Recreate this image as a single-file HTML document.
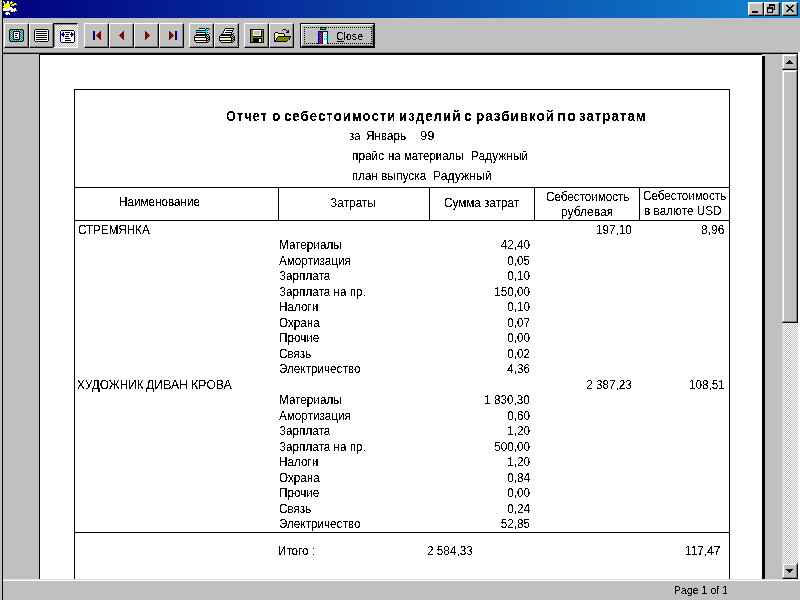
<!DOCTYPE html>
<html><head><meta charset="utf-8"><style>
html,body{margin:0;padding:0}
body{width:800px;height:600px;background:#c0c0c0;position:relative;overflow:hidden;font-family:"Liberation Sans",sans-serif}
.a{position:absolute}
.t{position:absolute;line-height:0;white-space:pre;font-size:11.7px;color:#000}
.r{text-align:right}
.btn{position:absolute;width:25px;height:25px;box-sizing:border-box;background:#c0c0c0;border-top:1px solid #fff;border-left:1px solid #fff;border-right:1px solid #000;border-bottom:1px solid #000;box-shadow:inset -1px -1px 0 #808080}
.tb{position:absolute;width:16px;height:14px;box-sizing:border-box;background:#c0c0c0;border-top:1px solid #fff;border-left:1px solid #fff;border-right:1px solid #000;border-bottom:1px solid #000;box-shadow:inset -1px -1px 0 #808080, inset 1px 1px 0 #dfdfdf}
svg{position:absolute;shape-rendering:crispEdges}
</style></head><body>

<div class="a" style="left:2px;top:0;width:1px;height:600px;background:#000"></div>
<div class="a" style="left:3px;top:0;width:797px;height:18px;background:linear-gradient(to right,#000080,#1084d0)"></div>
<svg style="left:3px;top:0px" width="15" height="15" viewBox="0 0 15 15"><path fill="#ffff00" d="M0 1h1v1h-1zM4 1h2v1h-2zM8 1h1v1h-1zM0 2h2v1h-2zM4 2h2v1h-2zM7 2h3v1h-3zM1 3h1v1h-1zM7 3h2v1h-2zM11 3h2v1h-2zM1 4h6v1h-6zM9 4h5v1h-5zM1 5h2v1h-2zM4 5h3v1h-3zM8 5h3v1h-3zM1 6h6v1h-6zM1 7h5v1h-5zM3 8h2v1h-2z"/><path fill="#fff" d="M3 3h3v1h-3zM3 5h1v1h-1zM0 6h1v1h-1zM6 7h3v1h-3zM0 8h3v1h-3zM5 8h5v1h-5zM11 8h2v1h-2zM0 9h13v1h-13zM0 10h6v1h-6zM8 10h6v1h-6zM8 11h2v1h-2zM11 11h1v1h-1zM3 12h3v1h-3zM2 13h5v1h-5zM3 14h2v1h-2zM6 14h1v1h-1z"/><path fill="#808080" d="M6 10h2v1h-2zM7 11h1v1h-1zM10 11h1v1h-1z"/><path fill="#000" d="M12 11h2v1h-2z"/></svg>
<div class="tb" style="left:748px;top:2px"></div>
<div class="a" style="left:752px;top:11px;width:6px;height:2px;background:#000"></div>
<div class="tb" style="left:764px;top:2px"></div>
<svg style="left:764px;top:2px" width="16" height="14" viewBox="0 0 16 14">
<path d="M5 2h6v2h-6zM10 4h1v4h-1zM9 7h1v1h-1zM5 4h1v1h-1z" fill="#000"/>
<path d="M3 5h6v2h-6zM3 7h1v4h-1zM8 7h1v4h-1zM3 10h6v1h-6z" fill="#000"/>
</svg>
<div class="tb" style="left:782px;top:2px"></div>
<svg style="left:782px;top:2px" width="16" height="14" viewBox="0 0 16 14">
<path d="M4 3h2v1h-2zM10 3h2v1h-2zM5 4h2v1h-2zM9 4h2v1h-2zM6 5h4v1h-4zM7 6h2v1h-2zM6 7h4v1h-4zM5 8h2v1h-2zM9 8h2v1h-2zM4 9h2v1h-2zM10 9h2v1h-2z" fill="#000"/>
</svg>
<div class="btn" style="left:4px;top:23px"></div>
<div class="btn" style="left:29px;top:23px"></div>
<div class="a" style="left:53px;top:23px;width:25px;height:25px;box-sizing:border-box;border-top:1px solid #000;border-left:1px solid #000;border-right:1px solid #fff;border-bottom:1px solid #fff;box-shadow:inset 1px 1px 0 #808080;background-color:#fff;background-image:linear-gradient(45deg,#c0c0c0 25%,transparent 25%,transparent 75%,#c0c0c0 75%),linear-gradient(45deg,#c0c0c0 25%,transparent 25%,transparent 75%,#c0c0c0 75%);background-size:2px 2px;background-position:0 0,1px 1px"></div>
<div class="btn" style="left:84px;top:23px"></div>
<div class="btn" style="left:109px;top:23px"></div>
<div class="btn" style="left:134px;top:23px"></div>
<div class="btn" style="left:159px;top:23px"></div>
<div class="btn" style="left:189px;top:23px"></div>
<div class="btn" style="left:214px;top:23px"></div>
<div class="btn" style="left:244px;top:23px"></div>
<div class="btn" style="left:269px;top:23px"></div>
<svg style="left:9px;top:29px" width="15" height="13" viewBox="0 0 15 13"><path fill="#000" d="M1 0h13v1h-13zM0 1h1v1h-1zM14 1h1v1h-1zM0 2h1v1h-1zM4 2h7v1h-7zM14 2h1v1h-1zM0 3h1v1h-1zM4 3h1v1h-1zM10 3h1v1h-1zM14 3h1v1h-1zM0 4h1v1h-1zM4 4h1v1h-1zM10 4h1v1h-1zM14 4h1v1h-1zM0 5h1v1h-1zM4 5h1v1h-1zM10 5h1v1h-1zM14 5h1v1h-1zM0 6h1v1h-1zM4 6h1v1h-1zM10 6h1v1h-1zM14 6h1v1h-1zM0 7h1v1h-1zM4 7h1v1h-1zM10 7h1v1h-1zM14 7h1v1h-1zM0 8h1v1h-1zM4 8h1v1h-1zM10 8h1v1h-1zM14 8h1v1h-1zM0 9h1v1h-1zM4 9h1v1h-1zM10 9h1v1h-1zM14 9h1v1h-1zM0 10h1v1h-1zM4 10h7v1h-7zM14 10h1v1h-1zM0 11h1v1h-1zM14 11h1v1h-1zM1 12h13v1h-13z"/><path fill="#008080" d="M1 1h1v1h-1zM3 1h1v1h-1zM5 1h1v1h-1zM7 1h1v1h-1zM9 1h1v1h-1zM11 1h1v1h-1zM13 1h1v1h-1zM2 2h1v1h-1zM12 2h1v1h-1zM1 3h1v1h-1zM3 3h1v1h-1zM11 3h1v1h-1zM13 3h1v1h-1zM2 4h1v1h-1zM12 4h1v1h-1zM1 5h1v1h-1zM3 5h1v1h-1zM11 5h1v1h-1zM13 5h1v1h-1zM2 6h1v1h-1zM12 6h1v1h-1zM1 7h1v1h-1zM3 7h1v1h-1zM11 7h1v1h-1zM13 7h1v1h-1zM2 8h1v1h-1zM12 8h1v1h-1zM1 9h1v1h-1zM3 9h1v1h-1zM11 9h1v1h-1zM13 9h1v1h-1zM2 10h1v1h-1zM12 10h1v1h-1zM1 11h1v1h-1zM3 11h1v1h-1zM5 11h1v1h-1zM7 11h1v1h-1zM9 11h1v1h-1zM11 11h1v1h-1zM13 11h1v1h-1z"/><path fill="#c0c0c0" d="M2 1h1v1h-1zM4 1h1v1h-1zM6 1h1v1h-1zM8 1h1v1h-1zM10 1h1v1h-1zM12 1h1v1h-1zM1 2h1v1h-1zM3 2h1v1h-1zM11 2h1v1h-1zM13 2h1v1h-1zM2 3h1v1h-1zM12 3h1v1h-1zM1 4h1v1h-1zM3 4h1v1h-1zM11 4h1v1h-1zM13 4h1v1h-1zM2 5h1v1h-1zM12 5h1v1h-1zM1 6h1v1h-1zM3 6h1v1h-1zM11 6h1v1h-1zM13 6h1v1h-1zM2 7h1v1h-1zM12 7h1v1h-1zM1 8h1v1h-1zM3 8h1v1h-1zM11 8h1v1h-1zM13 8h1v1h-1zM2 9h1v1h-1zM12 9h1v1h-1zM1 10h1v1h-1zM3 10h1v1h-1zM11 10h1v1h-1zM13 10h1v1h-1zM2 11h1v1h-1zM4 11h1v1h-1zM6 11h1v1h-1zM8 11h1v1h-1zM10 11h1v1h-1zM12 11h1v1h-1z"/><path fill="#fff" d="M5 3h5v1h-5zM5 4h1v1h-1zM9 4h1v1h-1zM5 5h5v1h-5zM5 6h1v1h-1zM8 6h2v1h-2zM5 7h5v1h-5zM5 8h1v1h-1zM9 8h1v1h-1zM5 9h5v1h-5z"/><path fill="#000080" d="M6 4h3v1h-3zM6 6h2v1h-2zM6 8h3v1h-3z"/></svg>
<svg style="left:34px;top:29px" width="15" height="13" viewBox="0 0 15 13"><path fill="#000" d="M1 0h13v1h-13zM0 1h1v1h-1zM14 1h1v1h-1zM0 2h1v1h-1zM2 2h11v1h-11zM14 2h1v1h-1zM0 3h1v1h-1zM14 3h1v1h-1zM0 4h1v1h-1zM2 4h11v1h-11zM14 4h1v1h-1zM0 5h1v1h-1zM14 5h1v1h-1zM0 6h1v1h-1zM2 6h11v1h-11zM14 6h1v1h-1zM0 7h1v1h-1zM14 7h1v1h-1zM0 8h1v1h-1zM2 8h11v1h-11zM14 8h1v1h-1zM0 9h1v1h-1zM14 9h1v1h-1zM0 10h1v1h-1zM2 10h11v1h-11zM14 10h1v1h-1zM0 11h1v1h-1zM14 11h1v1h-1zM1 12h13v1h-13z"/><path fill="#fff" d="M1 1h13v1h-13zM1 2h1v1h-1zM13 2h1v1h-1zM1 3h13v1h-13zM1 4h1v1h-1zM13 4h1v1h-1zM1 5h13v1h-13zM1 6h1v1h-1zM13 6h1v1h-1zM1 7h13v1h-13zM1 8h1v1h-1zM13 8h1v1h-1zM1 9h13v1h-13zM1 10h1v1h-1zM13 10h1v1h-1zM1 11h13v1h-13z"/></svg>
<svg style="left:60px;top:30px" width="15" height="13" viewBox="0 0 15 13"><path fill="#000" d="M1 0h13v1h-13zM14 1h1v1h-1zM5 2h5v1h-5zM14 2h1v1h-1zM14 3h1v1h-1zM6 4h3v1h-3zM14 4h1v1h-1zM14 5h1v1h-1zM5 6h4v1h-4zM14 6h1v1h-1zM14 7h1v1h-1zM5 8h5v1h-5zM14 8h1v1h-1zM14 9h1v1h-1zM5 10h6v1h-6zM14 10h1v1h-1zM14 11h1v1h-1zM1 12h13v1h-13z"/><path fill="#000080" d="M0 1h1v1h-1zM0 2h1v1h-1zM3 2h1v1h-1zM11 2h1v1h-1zM0 3h1v1h-1zM2 3h2v1h-2zM11 3h2v1h-2zM0 4h5v1h-5zM10 4h4v1h-4zM0 5h1v1h-1zM2 5h2v1h-2zM11 5h2v1h-2zM0 6h1v1h-1zM3 6h1v1h-1zM11 6h1v1h-1zM0 7h1v1h-1zM0 8h1v1h-1zM0 9h1v1h-1zM0 10h1v1h-1zM0 11h1v1h-1z"/><path fill="#fff" d="M1 1h13v1h-13zM1 2h2v1h-2zM4 2h1v1h-1zM10 2h1v1h-1zM12 2h2v1h-2zM1 3h1v1h-1zM4 3h7v1h-7zM13 3h1v1h-1zM5 4h1v1h-1zM9 4h1v1h-1zM1 5h1v1h-1zM4 5h7v1h-7zM13 5h1v1h-1zM1 6h2v1h-2zM4 6h1v1h-1zM9 6h2v1h-2zM12 6h2v1h-2zM1 7h13v1h-13zM1 8h4v1h-4zM10 8h4v1h-4zM1 9h13v1h-13zM1 10h4v1h-4zM11 10h3v1h-3zM1 11h13v1h-13z"/></svg>
<svg style="left:93px;top:31px" width="8" height="9" viewBox="0 0 8 9"><path fill="#000080" d="M0 0h2v1h-2zM0 1h2v1h-2zM0 2h2v1h-2zM0 3h2v1h-2zM0 4h2v1h-2zM0 5h2v1h-2zM0 6h2v1h-2zM0 7h2v1h-2zM0 8h2v1h-2z"/><path fill="#800000" d="M7 0h1v1h-1zM6 1h2v1h-2zM5 2h3v1h-3zM4 3h4v1h-4zM3 4h5v1h-5zM4 5h4v1h-4zM5 6h3v1h-3zM6 7h2v1h-2zM7 8h1v1h-1z"/></svg>
<svg style="left:119px;top:31px" width="5" height="9" viewBox="0 0 5 9"><path fill="#800000" d="M4 0h1v1h-1zM3 1h2v1h-2zM2 2h3v1h-3zM1 3h4v1h-4zM0 4h5v1h-5zM1 5h4v1h-4zM2 6h3v1h-3zM3 7h2v1h-2zM4 8h1v1h-1z"/></svg>
<svg style="left:145px;top:31px" width="5" height="9" viewBox="0 0 5 9"><path fill="#800000" d="M0 0h1v1h-1zM0 1h2v1h-2zM0 2h3v1h-3zM0 3h4v1h-4zM0 4h5v1h-5zM0 5h4v1h-4zM0 6h3v1h-3zM0 7h2v1h-2zM0 8h1v1h-1z"/></svg>
<svg style="left:169px;top:31px" width="8" height="9" viewBox="0 0 8 9"><path fill="#800000" d="M0 0h1v1h-1zM0 1h2v1h-2zM0 2h3v1h-3zM0 3h4v1h-4zM0 4h5v1h-5zM0 5h4v1h-4zM0 6h3v1h-3zM0 7h2v1h-2zM0 8h1v1h-1z"/><path fill="#000080" d="M6 0h2v1h-2zM6 1h2v1h-2zM6 2h2v1h-2zM6 3h2v1h-2zM6 4h2v1h-2zM6 5h2v1h-2zM6 6h2v1h-2zM6 7h2v1h-2zM6 8h2v1h-2z"/></svg>
<svg style="left:194px;top:28px" width="16" height="15" viewBox="0 0 16 15"><path fill="#000" d="M5 0h6v1h-6zM12 0h3v1h-3zM11 1h1v1h-1zM15 1h1v1h-1zM2 2h10v1h-10zM13 2h1v1h-1zM2 4h10v1h-10zM13 4h1v1h-1zM11 5h1v1h-1zM15 5h1v1h-1zM2 6h13v1h-13zM1 7h12v1h-12zM14 7h1v1h-1zM0 8h1v1h-1zM11 8h1v1h-1zM13 8h1v1h-1zM15 8h1v1h-1zM0 9h13v1h-13zM14 9h2v1h-2zM0 10h1v1h-1zM12 10h2v1h-2zM15 10h1v1h-1zM0 11h1v1h-1zM12 11h1v1h-1zM14 11h2v1h-2zM0 12h14v1h-14zM15 12h1v1h-1zM1 13h1v1h-1zM12 13h1v1h-1zM14 13h1v1h-1zM2 14h12v1h-12z"/><path fill="#fff" d="M5 1h6v1h-6zM3 5h8v1h-8zM1 8h10v1h-10zM1 10h11v1h-11zM1 11h6v1h-6zM10 11h2v1h-2zM2 13h10v1h-10z"/><path fill="#00ffff" d="M12 1h3v1h-3zM12 2h1v1h-1zM1 3h12v1h-12zM12 4h1v1h-1zM12 5h3v1h-3z"/><path fill="#c0c0c0" d="M13 7h1v1h-1zM12 8h1v1h-1zM14 8h1v1h-1zM13 9h1v1h-1zM14 10h1v1h-1zM13 11h1v1h-1zM14 12h1v1h-1zM13 13h1v1h-1z"/><path fill="#ffff00" d="M7 11h3v1h-3z"/></svg>
<svg style="left:219px;top:28px" width="16" height="15" viewBox="0 0 16 15"><path fill="#000" d="M6 0h9v1h-9zM5 1h1v1h-1zM14 1h1v1h-1zM5 2h1v1h-1zM7 2h7v1h-7zM4 3h1v1h-1zM13 3h1v1h-1zM4 4h1v1h-1zM6 4h7v1h-7zM3 5h1v1h-1zM12 5h1v1h-1zM14 5h1v1h-1zM2 6h12v1h-12zM1 7h12v1h-12zM14 7h1v1h-1zM0 8h1v1h-1zM11 8h1v1h-1zM13 8h1v1h-1zM15 8h1v1h-1zM0 9h13v1h-13zM14 9h2v1h-2zM0 10h1v1h-1zM12 10h2v1h-2zM15 10h1v1h-1zM0 11h1v1h-1zM12 11h1v1h-1zM14 11h2v1h-2zM0 12h14v1h-14zM15 12h1v1h-1zM1 13h1v1h-1zM12 13h1v1h-1zM14 13h1v1h-1zM2 14h12v1h-12z"/><path fill="#fff" d="M6 1h8v1h-8zM6 2h1v1h-1zM5 3h8v1h-8zM5 4h1v1h-1zM4 5h8v1h-8zM1 8h10v1h-10zM1 10h11v1h-11zM1 11h6v1h-6zM10 11h2v1h-2zM2 13h10v1h-10z"/><path fill="#c0c0c0" d="M13 5h1v1h-1zM14 6h1v1h-1zM13 7h1v1h-1zM12 8h1v1h-1zM14 8h1v1h-1zM13 9h1v1h-1zM14 10h1v1h-1zM13 11h1v1h-1zM14 12h1v1h-1zM13 13h1v1h-1z"/><path fill="#ffff00" d="M7 11h3v1h-3z"/></svg>
<svg style="left:250px;top:29px" width="14" height="14" viewBox="0 0 14 14"><path fill="#000" d="M0 0h14v1h-14zM0 1h1v1h-1zM11 1h1v1h-1zM13 1h1v1h-1zM0 2h1v1h-1zM11 2h3v1h-3zM0 3h1v1h-1zM11 3h1v1h-1zM13 3h1v1h-1zM0 4h1v1h-1zM11 4h1v1h-1zM13 4h1v1h-1zM0 5h1v1h-1zM11 5h1v1h-1zM13 5h1v1h-1zM0 6h1v1h-1zM11 6h1v1h-1zM13 6h1v1h-1zM0 7h1v1h-1zM3 7h9v1h-9zM13 7h1v1h-1zM0 8h1v1h-1zM13 8h1v1h-1zM0 9h1v1h-1zM3 9h9v1h-9zM13 9h1v1h-1zM0 10h1v1h-1zM3 10h6v1h-6zM11 10h1v1h-1zM13 10h1v1h-1zM0 11h1v1h-1zM3 11h6v1h-6zM11 11h1v1h-1zM13 11h1v1h-1zM0 12h1v1h-1zM3 12h6v1h-6zM11 12h1v1h-1zM13 12h1v1h-1zM0 13h14v1h-14z"/><path fill="#808000" d="M1 1h2v1h-2zM1 2h2v1h-2zM1 3h2v1h-2zM12 3h1v1h-1zM1 4h2v1h-2zM12 4h1v1h-1zM1 5h2v1h-2zM12 5h1v1h-1zM1 6h2v1h-2zM12 6h1v1h-1zM1 7h2v1h-2zM12 7h1v1h-1zM1 8h12v1h-12zM1 9h2v1h-2zM12 9h1v1h-1zM1 10h2v1h-2zM12 10h1v1h-1zM1 11h2v1h-2zM12 11h1v1h-1zM1 12h2v1h-2zM12 12h1v1h-1z"/><path fill="#fff" d="M3 1h8v1h-8zM12 1h1v1h-1zM3 2h1v1h-1zM10 2h1v1h-1zM3 3h1v1h-1zM10 3h1v1h-1zM3 4h1v1h-1zM10 4h1v1h-1zM3 5h1v1h-1zM10 5h1v1h-1zM3 6h8v1h-8zM9 10h2v1h-2zM9 11h2v1h-2zM9 12h2v1h-2z"/><path fill="#c0c0c0" d="M4 2h6v1h-6zM4 3h6v1h-6zM4 4h6v1h-6zM4 5h6v1h-6z"/></svg>
<svg style="left:274px;top:28px" width="18" height="14" viewBox="0 0 18 14"><path fill="#000" d="M9 1h3v1h-3zM8 2h1v1h-1zM12 2h1v1h-1zM14 2h1v1h-1zM13 3h2v1h-2zM1 4h3v1h-3zM12 4h3v1h-3zM0 5h1v1h-1zM4 5h6v1h-6zM0 6h1v1h-1zM10 6h1v1h-1zM0 7h1v1h-1zM10 7h1v1h-1zM0 8h1v1h-1zM4 8h13v1h-13zM0 9h1v1h-1zM3 9h1v1h-1zM16 9h1v1h-1zM0 10h1v1h-1zM2 10h1v1h-1zM15 10h1v1h-1zM0 11h1v1h-1zM2 11h1v1h-1zM15 11h1v1h-1zM0 12h2v1h-2zM13 12h1v1h-1zM0 13h13v1h-13z"/><path fill="#ffff00" d="M1 5h1v1h-1zM3 5h1v1h-1zM2 6h1v1h-1zM4 6h1v1h-1zM6 6h1v1h-1zM8 6h1v1h-1zM1 7h1v1h-1zM3 7h1v1h-1zM5 7h1v1h-1zM7 7h1v1h-1zM9 7h1v1h-1zM2 8h2v1h-2zM1 9h1v1h-1zM1 11h1v1h-1z"/><path fill="#fff" d="M2 5h1v1h-1zM1 6h1v1h-1zM3 6h1v1h-1zM5 6h1v1h-1zM7 6h1v1h-1zM9 6h1v1h-1zM2 7h1v1h-1zM4 7h1v1h-1zM6 7h1v1h-1zM8 7h1v1h-1zM1 8h1v1h-1zM2 9h1v1h-1zM1 10h1v1h-1z"/><path fill="#808000" d="M4 9h12v1h-12zM3 10h12v1h-12zM3 11h12v1h-12zM2 12h11v1h-11z"/></svg>
<div class="a" style="left:300px;top:23px;width:75px;height:25px;box-sizing:border-box;border:1px solid #000;background:#c0c0c0"></div>
<div class="a" style="left:301px;top:24px;width:73px;height:23px;box-sizing:border-box;border-top:1px solid #fff;border-left:1px solid #fff;border-right:1px solid #000;border-bottom:1px solid #000;box-shadow:inset -1px -1px 0 #808080"></div>
<div class="a" style="left:304px;top:27px;width:68px;height:1px;background:repeating-linear-gradient(to right,#000 0 1px,transparent 1px 2px)"></div>
<div class="a" style="left:304px;top:43px;width:68px;height:1px;background:repeating-linear-gradient(to right,#000 0 1px,transparent 1px 2px)"></div>
<div class="a" style="left:304px;top:27px;width:1px;height:17px;background:repeating-linear-gradient(to bottom,#000 0 1px,transparent 1px 2px)"></div>
<div class="a" style="left:371px;top:27px;width:1px;height:17px;background:repeating-linear-gradient(to bottom,#000 0 1px,transparent 1px 2px)"></div>
<svg style="left:317px;top:27px" width="12" height="17" viewBox="0 0 12 17"><path fill="#000" d="M3 0h6v1h-6zM3 1h1v1h-1zM8 1h1v1h-1zM3 2h6v1h-6zM3 5h1v1h-1zM5 5h1v1h-1zM2 6h1v1h-1zM4 6h2v1h-2zM3 7h1v1h-1zM5 7h1v1h-1zM2 8h1v1h-1zM4 8h2v1h-2zM3 9h1v1h-1zM5 9h1v1h-1zM2 10h1v1h-1zM4 10h2v1h-2zM3 11h1v1h-1zM5 11h1v1h-1zM2 12h1v1h-1zM4 12h2v1h-2zM3 13h1v1h-1zM5 13h1v1h-1zM2 14h1v1h-1zM4 14h2v1h-2zM3 15h1v1h-1zM5 15h1v1h-1zM2 16h1v1h-1zM4 16h2v1h-2z"/><path fill="#00ff00" d="M4 1h4v1h-4z"/><path fill="#000080" d="M1 4h10v1h-10zM1 5h1v1h-1zM10 5h1v1h-1zM1 6h1v1h-1zM10 6h1v1h-1zM1 7h1v1h-1zM10 7h1v1h-1zM1 8h1v1h-1zM10 8h1v1h-1zM1 9h1v1h-1zM10 9h1v1h-1zM1 10h1v1h-1zM10 10h1v1h-1zM1 11h1v1h-1zM10 11h1v1h-1zM1 12h1v1h-1zM10 12h1v1h-1zM1 13h1v1h-1zM10 13h1v1h-1zM1 14h1v1h-1zM10 14h1v1h-1zM1 15h1v1h-1zM10 15h1v1h-1zM0 16h2v1h-2zM10 16h2v1h-2z"/><path fill="#ff00ff" d="M2 5h1v1h-1zM4 5h1v1h-1zM3 6h1v1h-1zM2 7h1v1h-1zM4 7h1v1h-1zM3 8h1v1h-1zM2 9h1v1h-1zM4 9h1v1h-1zM3 10h1v1h-1zM2 11h1v1h-1zM4 11h1v1h-1zM3 12h1v1h-1zM2 13h1v1h-1zM4 13h1v1h-1zM3 14h1v1h-1zM2 15h1v1h-1zM4 15h1v1h-1zM3 16h1v1h-1z"/><path fill="#00ffff" d="M6 5h1v1h-1zM8 5h1v1h-1zM7 7h1v1h-1zM9 7h1v1h-1zM7 9h1v1h-1zM9 9h1v1h-1zM7 11h1v1h-1zM9 11h1v1h-1zM7 12h1v1h-1zM9 12h1v1h-1z"/><path fill="#fff" d="M7 5h1v1h-1zM9 5h1v1h-1zM6 6h4v1h-4zM6 7h1v1h-1zM8 7h1v1h-1zM6 8h4v1h-4zM6 9h1v1h-1zM8 9h1v1h-1zM6 10h4v1h-4zM6 11h1v1h-1zM8 11h1v1h-1zM6 12h1v1h-1zM8 12h1v1h-1zM6 13h4v1h-4zM6 14h4v1h-4zM6 15h4v1h-4zM6 16h4v1h-4z"/></svg>
<div class="a" style="left:337px;top:41px;width:7px;height:1px;background:#000"></div>
<div class="a" style="left:3px;top:52px;width:797px;height:1px;background:#808080"></div>
<div class="a" style="left:3px;top:53px;width:795px;height:1px;background:#000"></div>
<div class="a" style="left:798px;top:52px;width:2px;height:529px;background:#fff"></div>
<div class="a" style="left:3px;top:579px;width:797px;height:1px;background:#dfdfdf"></div>
<div class="a" style="left:3px;top:580px;width:797px;height:1px;background:#fff"></div>
<div class="a" style="left:39px;top:54px;width:723px;height:1px;background:#000"></div>
<div class="a" style="left:39px;top:54px;width:1px;height:525px;background:#000"></div>
<div class="a" style="left:40px;top:55px;width:722px;height:524px;background:#fff"></div>
<div class="a" style="left:762px;top:56px;width:3px;height:523px;background:#000"></div>
<div class="a" style="left:762px;top:55px;width:3px;height:1px;background:#dfdfdf"></div>
<div class="a" style="left:782px;top:54px;width:16px;height:525px;background-color:#fff;background-image:linear-gradient(45deg,#c0c0c0 25%,transparent 25%,transparent 75%,#c0c0c0 75%),linear-gradient(45deg,#c0c0c0 25%,transparent 25%,transparent 75%,#c0c0c0 75%);background-size:2px 2px;background-position:0 0,1px 1px"></div>
<div style="position:absolute;box-sizing:border-box;background:#c0c0c0;border-top:1px solid #dfdfdf;border-left:1px solid #dfdfdf;border-right:1px solid #000;border-bottom:1px solid #000;box-shadow:inset -1px -1px 0 #808080, inset 1px 1px 0 #fff;left:782px;top:54px;width:16px;height:16px"></div>
<svg style="left:782px;top:54px" width="16" height="16" viewBox="0 0 16 16"><path d="M7 6h1v1h-1zM6 7h3v1h-3zM5 8h5v1h-5zM4 9h7v1h-7z" fill="#000"/></svg>
<div style="position:absolute;box-sizing:border-box;background:#c0c0c0;border-top:1px solid #dfdfdf;border-left:1px solid #dfdfdf;border-right:1px solid #000;border-bottom:1px solid #000;box-shadow:inset -1px -1px 0 #808080, inset 1px 1px 0 #fff;left:782px;top:70px;width:16px;height:253px"></div>
<div style="position:absolute;box-sizing:border-box;background:#c0c0c0;border-top:1px solid #dfdfdf;border-left:1px solid #dfdfdf;border-right:1px solid #000;border-bottom:1px solid #000;box-shadow:inset -1px -1px 0 #808080, inset 1px 1px 0 #fff;left:782px;top:563px;width:16px;height:16px"></div>
<svg style="left:782px;top:563px" width="16" height="16" viewBox="0 0 16 16"><path d="M4 6h7v1h-7zM5 7h5v1h-5zM6 8h3v1h-3zM7 9h1v1h-1z" fill="#000"/></svg>
<div class="a" style="left:74px;top:89px;width:656px;height:1px;background:#000"></div>
<div class="a" style="left:74px;top:89px;width:1px;height:490px;background:#000"></div>
<div class="a" style="left:729px;top:89px;width:1px;height:490px;background:#000"></div>
<div class="a" style="left:74px;top:187px;width:656px;height:1px;background:#000"></div>
<div class="a" style="left:74px;top:220px;width:656px;height:1px;background:#000"></div>
<div class="a" style="left:74px;top:532px;width:656px;height:1px;background:#000"></div>
<div class="a" style="left:278px;top:187px;width:1px;height:34px;background:#000"></div>
<div class="a" style="left:429px;top:187px;width:1px;height:34px;background:#000"></div>
<div class="a" style="left:534px;top:187px;width:1px;height:34px;background:#000"></div>
<div class="a" style="left:639px;top:187px;width:1px;height:34px;background:#000"></div>
<svg width="0" height="0" style="position:absolute"><defs><filter id="th" color-interpolation-filters="sRGB"><feComponentTransfer><feFuncA type="discrete" tableValues="0 0 0 0 0 0 0 0 0 1 1 1 1 1 1 1 1 1 1 1"/></feComponentTransfer></filter></defs></svg>
<div class="a" style="left:0;top:0;width:800px;height:600px;filter:url(#th)">
<div class="t" style="left:336px;top:36px;font-size:11px;transform:scaleX(0.96);transform-origin:0 0">Close</div>
<div class="t" style="left:674px;top:590px;font-size:11px;transform:scaleX(0.96);transform-origin:0 0">Page 1 of 1</div>
<div class="t" style="left:279px;top:245px;font-size:12.5px;transform:scaleX(0.936);transform-origin:0 0;">Материалы</div>
<div class="t r" style="left:329px;top:245px;width:201px;font-size:12.5px;transform:scaleX(0.936);transform-origin:100% 0;">42,40</div>
<div class="t" style="left:279px;top:261px;font-size:12.5px;transform:scaleX(0.936);transform-origin:0 0;">Амортизация</div>
<div class="t r" style="left:329px;top:261px;width:201px;font-size:12.5px;transform:scaleX(0.936);transform-origin:100% 0;">0,05</div>
<div class="t" style="left:279px;top:276px;font-size:12.5px;transform:scaleX(0.936);transform-origin:0 0;">Зарплата</div>
<div class="t r" style="left:329px;top:276px;width:201px;font-size:12.5px;transform:scaleX(0.936);transform-origin:100% 0;">0,10</div>
<div class="t" style="left:279px;top:292px;font-size:12.5px;transform:scaleX(0.936);transform-origin:0 0;">Зарплата на пр.</div>
<div class="t r" style="left:329px;top:292px;width:201px;font-size:12.5px;transform:scaleX(0.936);transform-origin:100% 0;">150,00</div>
<div class="t" style="left:279px;top:307px;font-size:12.5px;transform:scaleX(0.936);transform-origin:0 0;">Налоги</div>
<div class="t r" style="left:329px;top:307px;width:201px;font-size:12.5px;transform:scaleX(0.936);transform-origin:100% 0;">0,10</div>
<div class="t" style="left:279px;top:323px;font-size:12.5px;transform:scaleX(0.936);transform-origin:0 0;">Охрана</div>
<div class="t r" style="left:329px;top:323px;width:201px;font-size:12.5px;transform:scaleX(0.936);transform-origin:100% 0;">0,07</div>
<div class="t" style="left:279px;top:338px;font-size:12.5px;transform:scaleX(0.936);transform-origin:0 0;">Прочие</div>
<div class="t r" style="left:329px;top:338px;width:201px;font-size:12.5px;transform:scaleX(0.936);transform-origin:100% 0;">0,00</div>
<div class="t" style="left:279px;top:354px;font-size:12.5px;transform:scaleX(0.936);transform-origin:0 0;">Связь</div>
<div class="t r" style="left:329px;top:354px;width:201px;font-size:12.5px;transform:scaleX(0.936);transform-origin:100% 0;">0,02</div>
<div class="t" style="left:279px;top:369px;font-size:12.5px;transform:scaleX(0.936);transform-origin:0 0;">Электричество</div>
<div class="t r" style="left:329px;top:369px;width:201px;font-size:12.5px;transform:scaleX(0.936);transform-origin:100% 0;">4,36</div>
<div class="t r" style="left:431px;top:385px;width:201px;font-size:12.5px;transform:translateX(-0.2px) scaleX(0.936);transform-origin:100% 0;">2 387,23</div>
<div class="t r" style="left:524px;top:385px;width:201px;font-size:12.5px;transform:translateX(-0.2px) scaleX(0.936);transform-origin:100% 0;">108,51</div>
<div class="t" style="left:279px;top:400px;font-size:12.5px;transform:scaleX(0.936);transform-origin:0 0;">Материалы</div>
<div class="t r" style="left:329px;top:400px;width:201px;font-size:12.5px;transform:translateX(-0.2px) scaleX(0.936);transform-origin:100% 0;">1 830,30</div>
<div class="t" style="left:279px;top:416px;font-size:12.5px;transform:scaleX(0.936);transform-origin:0 0;">Амортизация</div>
<div class="t r" style="left:329px;top:416px;width:201px;font-size:12.5px;transform:scaleX(0.936);transform-origin:100% 0;">0,60</div>
<div class="t" style="left:279px;top:431px;font-size:12.5px;transform:scaleX(0.936);transform-origin:0 0;">Зарплата</div>
<div class="t r" style="left:329px;top:431px;width:201px;font-size:12.5px;transform:scaleX(0.936);transform-origin:100% 0;">1,20</div>
<div class="t" style="left:279px;top:447px;font-size:12.5px;transform:scaleX(0.936);transform-origin:0 0;">Зарплата на пр.</div>
<div class="t r" style="left:329px;top:447px;width:201px;font-size:12.5px;transform:scaleX(0.936);transform-origin:100% 0;">500,00</div>
<div class="t" style="left:279px;top:462px;font-size:12.5px;transform:scaleX(0.936);transform-origin:0 0;">Налоги</div>
<div class="t r" style="left:329px;top:462px;width:201px;font-size:12.5px;transform:scaleX(0.936);transform-origin:100% 0;">1,20</div>
<div class="t" style="left:279px;top:478px;font-size:12.5px;transform:scaleX(0.936);transform-origin:0 0;">Охрана</div>
<div class="t r" style="left:329px;top:478px;width:201px;font-size:12.5px;transform:scaleX(0.936);transform-origin:100% 0;">0,84</div>
<div class="t" style="left:279px;top:493px;font-size:12.5px;transform:scaleX(0.936);transform-origin:0 0;">Прочие</div>
<div class="t r" style="left:329px;top:493px;width:201px;font-size:12.5px;transform:scaleX(0.936);transform-origin:100% 0;">0,00</div>
<div class="t" style="left:279px;top:509px;font-size:12.5px;transform:scaleX(0.936);transform-origin:0 0;">Связь</div>
<div class="t r" style="left:329px;top:509px;width:201px;font-size:12.5px;transform:scaleX(0.936);transform-origin:100% 0;">0,24</div>
<div class="t" style="left:279px;top:524px;font-size:12.5px;transform:scaleX(0.936);transform-origin:0 0;">Электричество</div>
<div class="t r" style="left:329px;top:524px;width:201px;font-size:12.5px;transform:scaleX(0.936);transform-origin:100% 0;">52,85</div>
<div class="t" style="left:226.18px;top:116px;font-size:15.5px;font-weight:bold;letter-spacing:1.2px;transform:scaleX(0.8229);transform-origin:0 0">Отчет</div>
<div class="t" style="left:272.12px;top:116px;font-size:15.5px;font-weight:bold;letter-spacing:1.2px;transform:scaleX(0.8750);transform-origin:0 0">о</div>
<div class="t" style="left:284.15px;top:116px;font-size:15.5px;font-weight:bold;letter-spacing:1.2px;transform:scaleX(0.8527);transform-origin:0 0">себестоимости</div>
<div class="t" style="left:399.15px;top:116px;font-size:15.5px;font-weight:bold;letter-spacing:1.2px;transform:scaleX(0.8536);transform-origin:0 0">изделий</div>
<div class="t" style="left:464.14px;top:116px;font-size:15.5px;font-weight:bold;letter-spacing:1.2px;transform:scaleX(0.8571);transform-origin:0 0">с</div>
<div class="t" style="left:476.14px;top:116px;font-size:15.5px;font-weight:bold;letter-spacing:1.2px;transform:scaleX(0.8636);transform-origin:0 0">разбивкой</div>
<div class="t" style="left:557.06px;top:116px;font-size:15.5px;font-weight:bold;letter-spacing:1.2px;transform:scaleX(0.9444);transform-origin:0 0">по</div>
<div class="t" style="left:579.14px;top:116px;font-size:15.5px;font-weight:bold;letter-spacing:1.2px;transform:scaleX(0.8553);transform-origin:0 0">затратам</div>
<div class="t" style="left:348.85px;top:136px;font-size:12.5px;font-weight:normal;transform:scaleX(0.8958);transform-origin:0 0">за</div>
<div class="t" style="left:365.57px;top:136px;font-size:12.5px;font-weight:normal;transform:scaleX(0.9329);transform-origin:0 0">Январь</div>
<div class="t" style="left:419.57px;top:136px;font-size:12.5px;font-weight:normal;transform:scaleX(1.0333);transform-origin:0 0">99</div>
<div class="t" style="left:351.8px;top:156px;font-size:12.5px;font-weight:normal;transform:scaleX(0.9453);transform-origin:0 0">прайс</div>
<div class="t" style="left:387.68px;top:156px;font-size:12.5px;font-weight:normal;transform:scaleX(0.9154);transform-origin:0 0">на</div>
<div class="t" style="left:403.98px;top:156px;font-size:12.5px;font-weight:normal;transform:scaleX(0.9159);transform-origin:0 0">материалы</div>
<div class="t" style="left:470.54px;top:156px;font-size:12.5px;font-weight:normal;transform:scaleX(0.9569);transform-origin:0 0">Радужный</div>
<div class="t" style="left:351.83px;top:176px;font-size:12.5px;font-weight:normal;transform:scaleX(0.9231);transform-origin:0 0">план</div>
<div class="t" style="left:380.54px;top:176px;font-size:12.5px;font-weight:normal;transform:scaleX(0.9565);transform-origin:0 0">выпуска</div>
<div class="t" style="left:433.27px;top:176px;font-size:12.5px;font-weight:normal;transform:scaleX(0.9784);transform-origin:0 0">Радужный</div>
<div class="t" style="left:118.97px;top:202px;font-size:12.5px;font-weight:normal;transform:scaleX(0.9335);transform-origin:0 0">Наименование</div>
<div class="t" style="left:329.54px;top:203px;font-size:12.5px;font-weight:normal;transform:scaleX(0.9565);transform-origin:0 0">Затраты</div>
<div class="t" style="left:443.82px;top:203px;font-size:12.5px;font-weight:normal;transform:scaleX(0.9348);transform-origin:0 0">Сумма затрат</div>
<div class="t" style="left:545.82px;top:197px;font-size:12.5px;font-weight:normal;transform:scaleX(0.9318);transform-origin:0 0">Себестоимость</div>
<div class="t" style="left:560.79px;top:212px;font-size:12.5px;font-weight:normal;transform:scaleX(0.9615);transform-origin:0 0">рублевая</div>
<div class="t" style="left:642.82px;top:196px;font-size:12.5px;font-weight:normal;transform:scaleX(0.9290);transform-origin:0 0">Себестоимость</div>
<div class="t" style="left:644.06px;top:211px;font-size:12.5px;font-weight:normal;transform:scaleX(0.9414);transform-origin:0 0">в валюте USD</div>
<div class="t" style="left:77.87px;top:230px;font-size:12.5px;font-weight:normal;transform:scaleX(0.9303);transform-origin:0 0">СТРЕМЯНКА</div>
<div class="t" style="left:595.66px;top:230px;font-size:12.5px;font-weight:normal;transform:scaleX(0.9351);transform-origin:0 0">197,10</div>
<div class="t" style="left:701.44px;top:230px;font-size:12.5px;font-weight:normal;transform:scaleX(0.9609);transform-origin:0 0">8,96</div>
<div class="t" style="left:76.86px;top:385px;font-size:12.5px;font-weight:normal;transform:scaleX(0.9449);transform-origin:0 0">ХУДОЖНИК</div>
<div class="t" style="left:146.2px;top:385px;font-size:12.5px;font-weight:normal;transform:scaleX(0.9833);transform-origin:0 0">ДИВАН</div>
<div class="t" style="left:190.61px;top:385px;font-size:12.5px;font-weight:normal;transform:scaleX(0.9875);transform-origin:0 0">КРОВА</div>
<div class="t" style="left:277.97px;top:551px;font-size:12.5px;font-weight:normal;transform:scaleX(0.9342);transform-origin:0 0">Итого :</div>
<div class="t" style="left:426.96px;top:551px;font-size:12.5px;font-weight:normal;transform:scaleX(0.9404);transform-origin:0 0">2 584,33</div>
<div class="t" style="left:684.8px;top:551px;font-size:12.5px;font-weight:normal;transform:scaleX(0.9486);transform-origin:0 0">117,47</div>
</div>
</body></html>
